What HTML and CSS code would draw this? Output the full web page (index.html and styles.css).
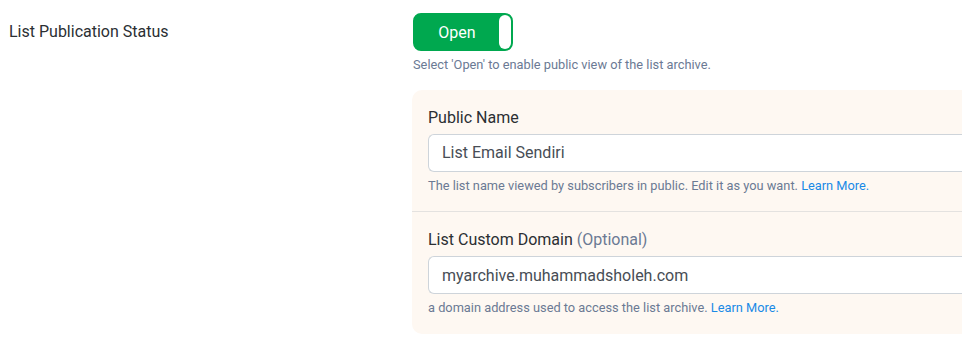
FILE: index.html
```html
<!DOCTYPE html>
<html>
  <head>
    <meta charset="utf-8">
    <title>List publication</title>
    <link rel="stylesheet" href="styles.css">
  </head>
  <body>
    <div class="form-row">
      <div class="row-label">List Publication Status</div>
      <div class="row-body">
        <div class="toggle">
          <span class="toggle-text">Open</span>
          <span class="toggle-knob"></span>
        </div>
        <p class="help">Select 'Open' to enable public view of the list archive.</p>

        <div class="panel">
          <div class="panel-item">
            <label class="field-label">Public Name</label>
            <div class="input">List Email Sendiri</div>
            <p class="help">The list name viewed by subscribers in public. Edit it as you want. <a href="#">Learn More.</a></p>
          </div>
          <div class="panel-item">
            <label class="field-label">List Custom Domain <span class="muted">(Optional)</span></label>
            <div class="input">myarchive.muhammadsholeh.com</div>
            <p class="help">a domain address used to access the list archive. <a href="#">Learn More.</a></p>
          </div>
        </div>
      </div>
    </div>
  </body>
</html>
```

FILE: styles.css
```css
html {
  font-family: Roboto, "Liberation Sans", sans-serif;
}
body {
  margin: 8px 0 8px 8px;
  background-color: #ffffff;
  color: #212529;
}
.form-row {
  display: grid;
  grid-template-columns: 405px 1fr;
}
.row-label {
  font-size: 16px;
  line-height: 24px;
  padding: 12px 0 0 1px;
  color: #2b2f33;
}
.row-body {
  padding-top: 5px;
}
.toggle {
  display: flex;
  align-items: center;
  width: 100px;
  height: 38px;
  box-sizing: border-box;
  border: 2px solid #00a84f;
  border-radius: 8px;
  background-color: #00a84f;
}
.toggle-text {
  flex: 1;
  text-align: center;
  color: #ffffff;
  font-size: 16px;
}
.toggle-knob {
  width: 12px;
  height: 34px;
  background-color: #ffffff;
  border-radius: 6px;
}
.help {
  margin: 4px 0 0 0;
  font-size: 12.8px;
  line-height: 19.5px;
  color: #6b7a94;
}
.help a {
  color: #1a8ae6;
  text-decoration: none;
}
.panel {
  margin-top: 15px;
  margin-left: -1px;
  background-color: #fef8f2;
  border-radius: 10px 0 0 10px;
}
.panel-item {
  padding: 16px 0 16px 16px;
}
.panel-item + .panel-item {
  border-top: 1px solid #e4e2e0;
}
.field-label {
  display: block;
  font-size: 16px;
  line-height: 24px;
  color: #2b2f33;
}
.muted {
  color: #6b7a94;
}
.input {
  margin-top: 4px;
  height: 38px;
  box-sizing: border-box;
  padding: 0 13px;
  display: flex;
  align-items: center;
  background-color: #ffffff;
  border: 1px solid #ced4da;
  border-right: 0;
  border-radius: 6px 0 0 6px;
  font-size: 16px;
  color: #474d55;
}
```
